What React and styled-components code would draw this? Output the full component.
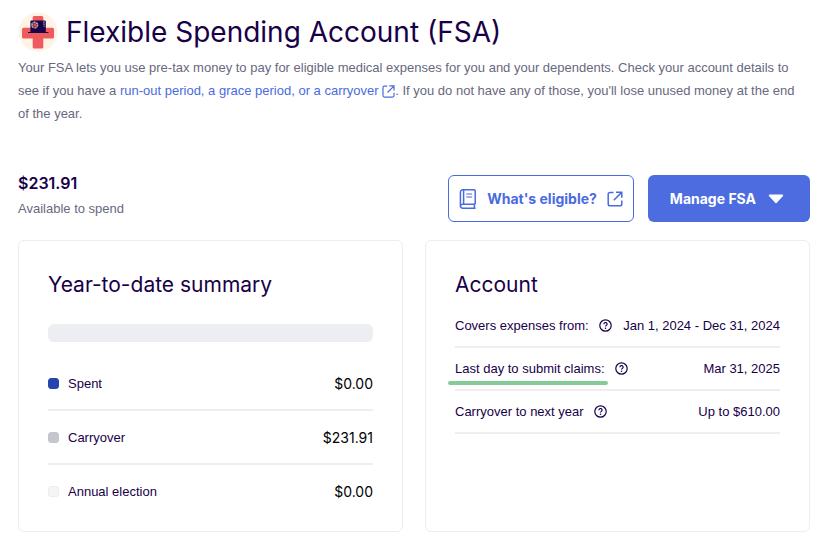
import React from "react";
import styled, { createGlobalStyle } from "styled-components";

const summaryRows = [
    { label: "Spent", amount: "$0.00", color: "#2845ad", edge: "#2845ad" },
    { label: "Carryover", amount: "$231.91", color: "#c3c7cd", edge: "#c3c7cd" },
    { label: "Annual election", amount: "$0.00", color: "#f4f5f7", edge: "#ededf1" },
];

const accountRows = [
    { label: "Covers expenses from:", value: "Jan 1, 2024 - Dec 31, 2024" },
    { label: "Last day to submit claims:", value: "Mar 31, 2025", marked: true },
    { label: "Carryover to next year", value: "Up to $610.00" },
];

const FsaLogo = () => (
    <svg width="40" height="40" viewBox="0 0 40 40" aria-hidden="true">
        <circle cx="20" cy="20" r="19.5" fill="#fff3e5" />
        <rect x="14.7" y="4" width="10.6" height="32.4" rx="1.5" fill="#ef5a5f" />
        <rect x="4" y="15.8" width="32" height="10.6" rx="1.5" fill="#ef5a5f" />
        <rect x="12.4" y="8.6" width="15.4" height="12" rx="1" fill="#180048" />
        <rect x="10" y="20" width="20.4" height="1" fill="#180048" />
        <circle cx="16.7" cy="13" r="2.7" fill="none" stroke="#f4a340" strokeWidth="1.8" strokeDasharray="1.6 1.2" />
        <circle cx="16.7" cy="13" r="2.7" fill="none" stroke="#6b79e8" strokeWidth="1.8" strokeDasharray="1.2 1.6" strokeDashoffset="-1.6" />
        <circle cx="16.7" cy="13" r="1.4" fill="#e2506b" />
        <path d="M25.2 10.2h1.4M25.2 12.2h1.4M25.6 14.2h1" stroke="#a9a3c4" strokeWidth="1.2" />
    </svg>
);

const ExternalIcon = ({ size }) => (
    <svg width={size} height={size} viewBox="0 0 16 16" fill="none" stroke="currentColor" strokeWidth="1.5" aria-hidden="true">
        <path d="M6.5 1.5H3A1.8 1.8 0 0 0 1.2 3.3V13A1.8 1.8 0 0 0 3 14.8H13A1.8 1.8 0 0 0 14.8 13V9.5" />
        <path d="M9 1.2H14.8V6.8M14.6 1.4L6.8 9.2" />
    </svg>
);

const BookIcon = () => (
    <svg width="18" height="20" viewBox="0 0 18 20" fill="none" stroke="currentColor" strokeWidth="1.5" aria-hidden="true">
        <path d="M16.2 15.2V2A1.2 1.2 0 0 0 15 .8H3.8A2.4 2.4 0 0 0 1.4 3.2V17A2.2 2.2 0 0 0 3.6 19.2H16.6" />
        <path d="M1.4 17A2.2 2.2 0 0 1 3.6 15.2H16.2M15.4 15.2V19.2M4.6 1V15" />
        <path d="M7.2 5H13.2M7.2 8H13.2" strokeWidth="1.2" />
    </svg>
);

const HelpIcon = () => (
    <svg width="13" height="13" viewBox="0 0 13 13" fill="none" stroke="currentColor" aria-hidden="true">
        <circle cx="6.5" cy="6.5" r="5.7" strokeWidth="1.2" />
        <path d="M4.9 5.2A1.6 1.6 0 1 1 7.3 6.5C6.7 6.8 6.5 7 6.5 7.6" strokeWidth="1.2" />
        <path d="M6.5 8.6V9.9" strokeWidth="1.3" />
    </svg>
);

const CaretIcon = () => (
    <svg width="16" height="10" viewBox="0 0 16 10" aria-hidden="true">
        <path d="M1.6 1.4H14.4L8 8.4Z" fill="currentColor" stroke="currentColor" strokeWidth="1.6" strokeLinejoin="round" />
    </svg>
);

const App = () => {
    return (
        <Page>
            <GlobalStyle />
            <Header>
                <FsaLogo />
                <Title>Flexible Spending Account (FSA)</Title>
            </Header>
            <Intro>
                Your FSA lets you use pre-tax money to pay for eligible medical expenses for you and your
                dependents. Check your account details to see if you have a{" "}
                <IntroLink href="#periods">
                    run-out period, a grace period, or a carryover <ExternalIcon size={13} />
                </IntroLink>
                . If you do not have any of those, you'll lose unused money at the end of the year.
            </Intro>
            <Toolbar>
                <Balance>
                    <BalanceAmount>$231.91</BalanceAmount>
                    <BalanceLabel>Available to spend</BalanceLabel>
                </Balance>
                <Actions>
                    <EligibleLink href="#eligible">
                        <BookIcon />
                        What's eligible?
                        <ExternalIcon size={16} />
                    </EligibleLink>
                    <ManageButton type="button">
                        Manage FSA
                        <CaretIcon />
                    </ManageButton>
                </Actions>
            </Toolbar>
            <Cards>
                <Card>
                    <CardTitle>Year-to-date summary</CardTitle>
                    <Bar />
                    <SummaryList>
                        {summaryRows.map((row) => (
                            <SummaryRow key={row.label}>
                                <SummaryLabel>
                                    <Swatch $color={row.color} $edge={row.edge} />
                                    {row.label}
                                </SummaryLabel>
                                <Amount>{row.amount}</Amount>
                            </SummaryRow>
                        ))}
                    </SummaryList>
                </Card>
                <Card>
                    <CardTitle>Account</CardTitle>
                    <AccountList>
                        {accountRows.map((row) => (
                            <AccountRow key={row.label}>
                                <AccountLabel>
                                    <LabelText $marked={row.marked}>{row.label}</LabelText>
                                    <HelpButton type="button" aria-label="Help">
                                        <HelpIcon />
                                    </HelpButton>
                                </AccountLabel>
                                <AccountValue>{row.value}</AccountValue>
                            </AccountRow>
                        ))}
                    </AccountList>
                </Card>
            </Cards>
        </Page>
    );
};

export default App;

const GlobalStyle = createGlobalStyle`
    * {
        box-sizing: border-box;
    }
    body {
        margin: 0;
        background: #fff;
        color: #180048;
        font-family: "Liberation Sans", Arial, sans-serif;
        font-size: 13px;
    }
    h1, h2, button {
        font-family: Inter, "Liberation Sans", sans-serif;
    }
`;
const Page = styled.main`
    padding: 12px 30px 0 18px;
`;
const Header = styled.header`
    display: flex;
    align-items: center;
    gap: 8px;
    height: 40px;
`;
const Title = styled.h1`
    margin: 0;
    font-size: 28px;
    font-weight: 400;
    line-height: 40px;
`;
const Intro = styled.p`
    margin: 4px 0 0;
    padding-right: 8px;
    color: #686880;
    line-height: 23px;
`;
const IntroLink = styled.a`
    color: #4a6bdf;
    text-decoration: none;
    svg {
        vertical-align: -3px;
    }
`;
const Toolbar = styled.div`
    display: flex;
    justify-content: space-between;
    margin-top: 50px;
`;
const Balance = styled.div`
    display: flex;
    flex-direction: column;
    gap: 8px;
`;
const BalanceAmount = styled.div`
    font-family: Inter, "Liberation Sans", sans-serif;
    font-size: 16px;
    font-weight: 600;
    line-height: 16px;
`;
const BalanceLabel = styled.div`
    color: #686880;
    line-height: 20px;
`;
const Actions = styled.div`
    display: flex;
    gap: 14px;
`;
const EligibleLink = styled.a`
    display: flex;
    align-items: center;
    gap: 10px;
    height: 47px;
    padding: 0 10px;
    border: 1px solid #4a6bdf;
    border-radius: 6px;
    color: #4a6bdf;
    font-family: Inter, "Liberation Sans", sans-serif;
    font-size: 14px;
    font-weight: 700;
    text-decoration: none;
`;
const ManageButton = styled.button`
    display: flex;
    align-items: center;
    gap: 12px;
    height: 47px;
    padding: 0 26px 0 22px;
    border: none;
    border-radius: 6px;
    background: #4c6cdf;
    color: #fff;
    font-size: 14px;
    font-weight: 700;
    cursor: pointer;
`;
const Cards = styled.div`
    display: grid;
    grid-template-columns: 1fr 1fr;
    gap: 22px;
    margin-top: 18px;
`;
const Card = styled.section`
    padding: 27px 29px 14px;
    border: 1px solid #ededf1;
    border-radius: 6px;
`;
const CardTitle = styled.h2`
    margin: 0;
    font-size: 21px;
    font-weight: 400;
    line-height: 34px;
`;
const Bar = styled.div`
    height: 18px;
    margin-top: 22px;
    border-radius: 6px;
    background: #edeef2;
`;
const SummaryList = styled.ul`
    margin: 15px 0 0;
    padding: 0;
    list-style: none;
`;
const SummaryRow = styled.li`
    display: flex;
    align-items: center;
    justify-content: space-between;
    height: 54px;
    border-bottom: 2px solid #ededf2;
    &:last-child {
        height: 52px;
        border-bottom: none;
    }
`;
const SummaryLabel = styled.span`
    display: flex;
    align-items: center;
    gap: 9px;
`;
const Swatch = styled.span`
    width: 11px;
    height: 11px;
    border: 1px solid ${(props) => props.$edge};
    border-radius: 3px;
    background: ${(props) => props.$color};
`;
const Amount = styled.span`
    color: #000;
    font-family: Inter, "Liberation Sans", sans-serif;
    font-size: 14px;
`;
const AccountList = styled.ul`
    margin: 3px 0 0;
    padding: 0;
    list-style: none;
`;
const AccountRow = styled.li`
    display: flex;
    align-items: center;
    justify-content: space-between;
    height: 43px;
    border-bottom: 2px solid #ededf2;
    white-space: nowrap;
`;
const AccountLabel = styled.span`
    display: flex;
    align-items: center;
    gap: 10px;
`;
const LabelText = styled.span`
    position: relative;
    &::after {
        content: "";
        display: ${(props) => (props.$marked ? "block" : "none")};
        position: absolute;
        left: -7px;
        right: -3px;
        bottom: -9px;
        height: 4px;
        border-radius: 2px;
        background: #85cb98;
    }
`;
const HelpButton = styled.button`
    display: flex;
    padding: 0;
    border: none;
    background: none;
    color: #180048;
    cursor: pointer;
`;
const AccountValue = styled.span`
    text-align: right;
`;
